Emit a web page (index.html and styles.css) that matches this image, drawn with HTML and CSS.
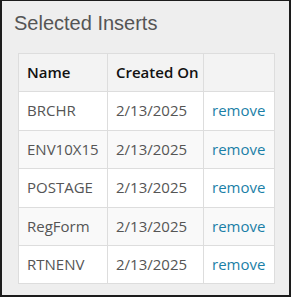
FILE: index.html
```html
<!DOCTYPE html>
<html lang="en">
<head>
  <meta charset="UTF-8">
  <title>Selected Inserts</title>
  <link rel="stylesheet" href="styles.css">
</head>
<body>
  <div class="panel">
    <h2 class="panel-title">Selected Inserts</h2>
    <table class="inserts-table">
      <colgroup>
        <col class="col-name">
        <col class="col-date">
        <col class="col-action">
      </colgroup>
      <thead>
        <tr>
          <th>Name</th>
          <th>Created On</th>
          <th></th>
        </tr>
      </thead>
      <tbody>
        <tr><td>BRCHR</td><td>2/13/2025</td><td><a href="#">remove</a></td></tr>
        <tr><td>ENV10X15</td><td>2/13/2025</td><td><a href="#">remove</a></td></tr>
        <tr><td>POSTAGE</td><td>2/13/2025</td><td><a href="#">remove</a></td></tr>
        <tr><td>RegForm</td><td>2/13/2025</td><td><a href="#">remove</a></td></tr>
        <tr><td>RTNENV</td><td>2/13/2025</td><td><a href="#">remove</a></td></tr>
      </tbody>
    </table>
  </div>
</body>
</html>
```
FILE: styles.css
```css
html, body {
  margin: 0;
  height: 100%;
}

body {
  font-family: "Open Sans", Arial, sans-serif;
  background-color: #eeeeee;
  box-sizing: border-box;
  border: 2px solid #1c1c1c;
  border-top-width: 1px;
}

.panel {
  padding: 8px 16px 0 16px;
}

.panel-title {
  margin: 0 0 16px -4px;
  font-family: "Liberation Sans", Arial, sans-serif;
  font-size: 20px;
  font-weight: normal;
  line-height: 28px;
  color: #555555;
}

.inserts-table {
  width: 256px;
  table-layout: fixed;
  border-collapse: collapse;
  background-color: #ffffff;
  font-size: 15px;
  line-height: 21.4px;
}

.col-name { width: 89px; }
.col-date { width: 96px; }
.col-action { width: 71px; }

.inserts-table th,
.inserts-table td {
  border: 1px solid #dddddd;
  padding: 8px;
  text-align: left;
  white-space: nowrap;
  overflow: hidden;
}

.inserts-table th {
  background-color: #f3f3f3;
  color: #111111;
  font-weight: 600;
}

.inserts-table td {
  color: #555555;
}

.inserts-table tbody tr:nth-child(even) td {
  background-color: #f9f9f9;
}

.inserts-table a {
  color: #1b7fa7;
  text-decoration: none;
}
```
